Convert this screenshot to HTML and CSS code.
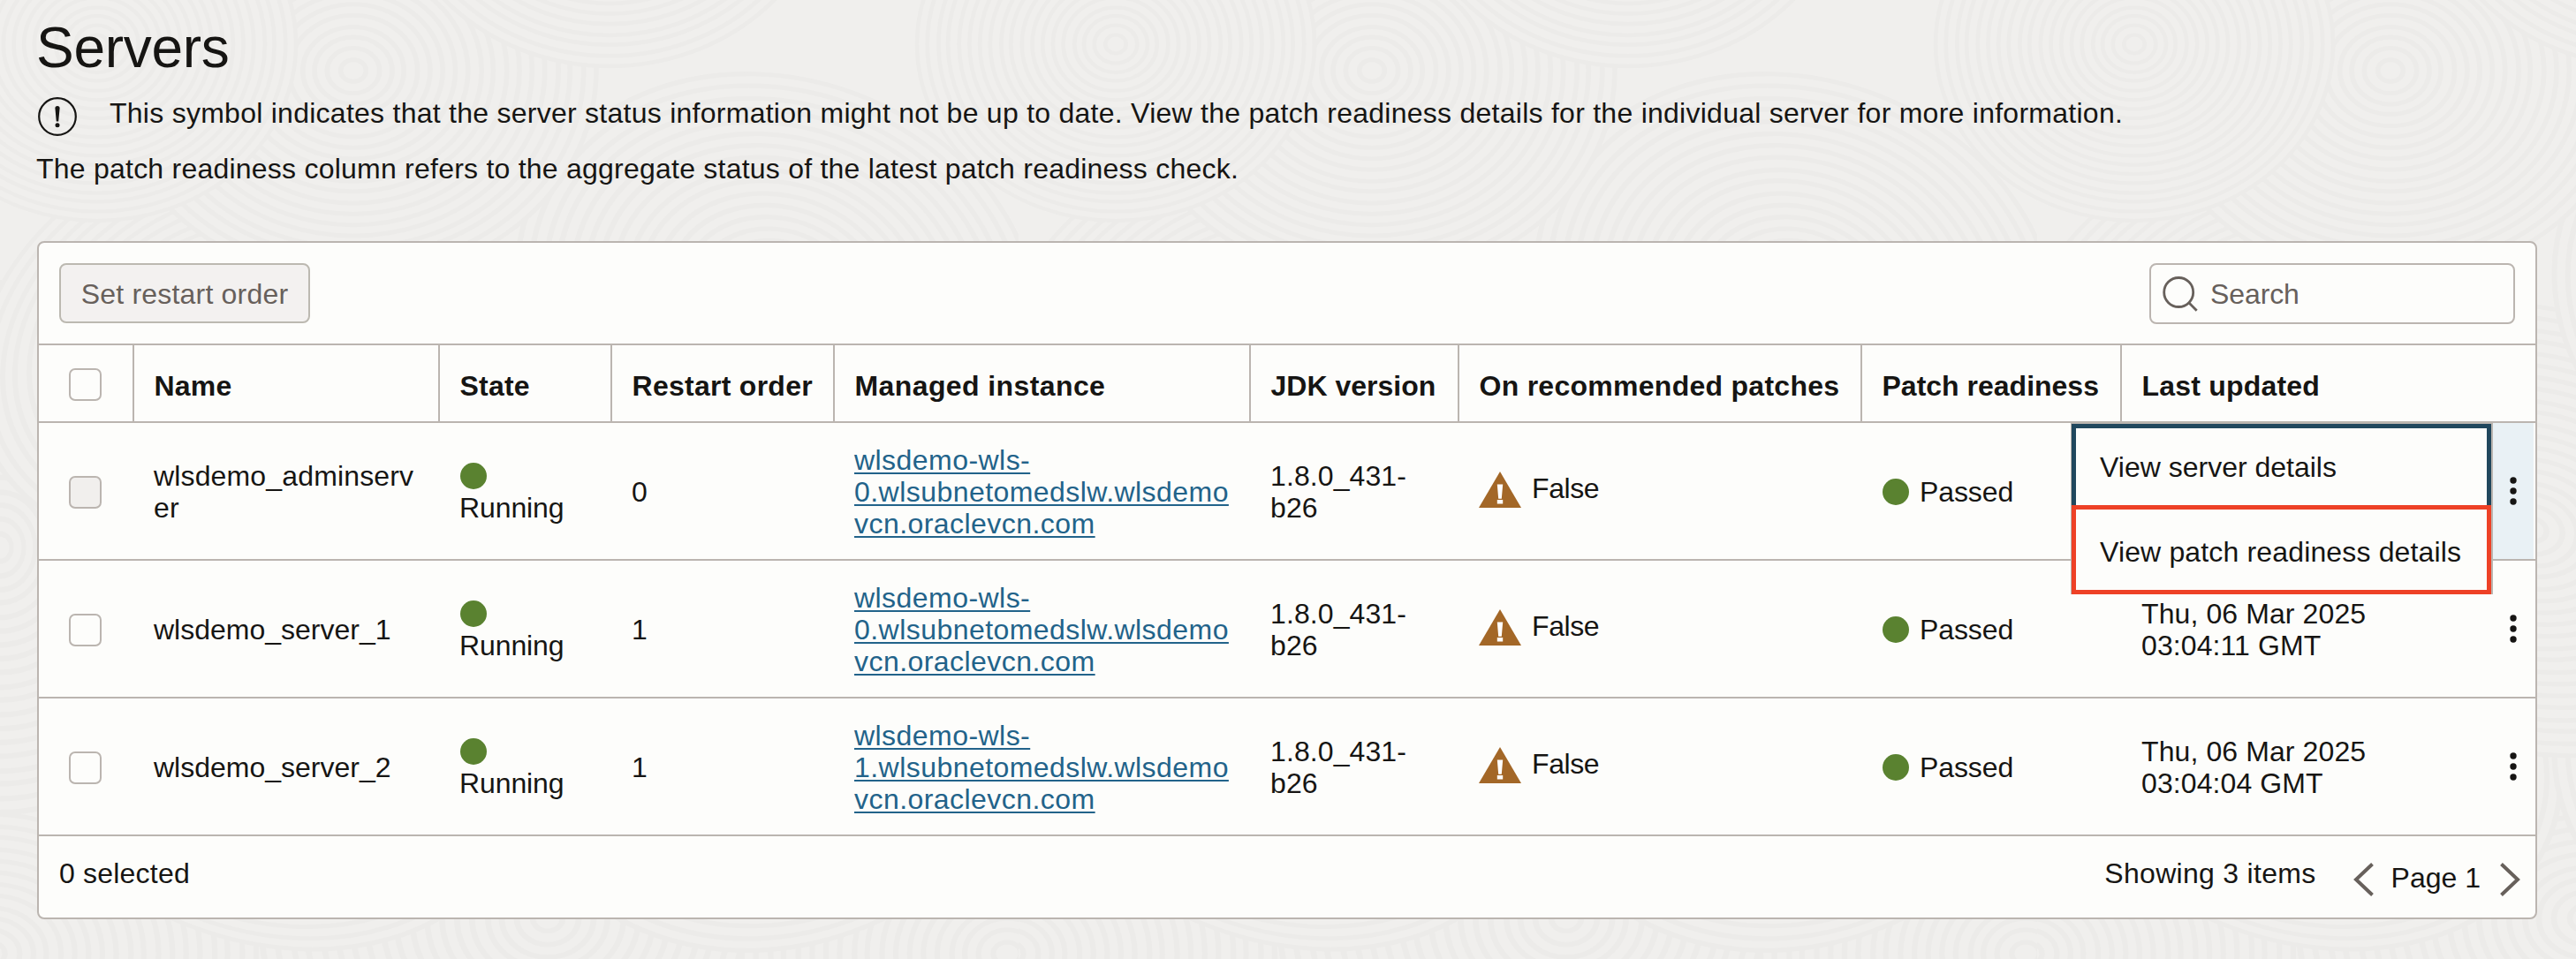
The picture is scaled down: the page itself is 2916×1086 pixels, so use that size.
FILE: index.html
```
<!DOCTYPE html>
<html lang="en">
<head>
<meta charset="utf-8">
<title>Servers</title>
<link rel="stylesheet" href="styles.css">
</head>
<body>
<svg class="texture" aria-hidden="true">
  <defs>
    <g id="rings">
      <circle r="250"/><circle r="237"/><circle r="223"/><circle r="211"/><circle r="197"/><circle r="184"/><circle r="171"/><circle r="158"/><circle r="144"/><circle r="132"/><circle r="118"/><circle r="105"/><circle r="92"/><circle r="79"/><circle r="66"/><circle r="52"/><circle r="40"/><circle r="27"/><circle r="13"/>
    </g>
    <pattern id="swirl" width="1153" height="1100" patternUnits="userSpaceOnUse">
      <g fill="#f0efed" stroke="#ecebe9" stroke-width="5">
        <use href="#rings" transform="translate(100 1060) scale(1.3 1)"/>
        <use href="#rings" transform="translate(620 1040) scale(1.3 1.1)"/>
        <use href="#rings" transform="translate(1140 1080) scale(1.2 1)"/>
        <use href="#rings" transform="translate(-10 1080) scale(1.2 1)"/>
        <use href="#rings" transform="translate(300 840) rotate(20) scale(1.2 .9)"/>
        <use href="#rings" transform="translate(880 820) rotate(-20) scale(1.2 1)"/>
        <use href="#rings" transform="translate(1153 620) scale(1 1.2)"/>
        <use href="#rings" transform="translate(0 620) scale(1 1.2)"/>
        <use href="#rings" transform="translate(560 600) rotate(15) scale(1.3 1)"/>
        <use href="#rings" transform="translate(260 380) rotate(-25) scale(1.2 .9)"/>
        <use href="#rings" transform="translate(880 340) rotate(20) scale(1.2 1)"/>
        <use href="#rings" transform="translate(400 80) scale(1.1 .95)"/>
        <use href="#rings" transform="translate(690 -150) scale(1 .9)"/>
        <use href="#rings" transform="translate(110 50) scale(.9 .8)"/>
        <use href="#rings" transform="translate(1263 50) scale(.9 .8)"/>
      </g>
    </pattern>
  </defs>
  <rect width="100%" height="100%" fill="url(#swirl)"/>
</svg>

<svg class="sprite" aria-hidden="true">
  <symbol id="warning" viewBox="0 0 48 41">
    <path d="M24 0L48 41H0z" fill="#a36727"/>
    <path d="M20.8 14.5h6.4l-1.4 16.2h-3.6zM20.8 32h6.4v4.6h-6.4z" fill="#fff"/>
  </symbol>
  <symbol id="kebab" viewBox="0 0 8 32">
    <circle cx="4" cy="4" r="3.7"/><circle cx="4" cy="16" r="3.7"/><circle cx="4" cy="28" r="3.7"/>
  </symbol>
</svg>

<main class="page">
  <h1 class="title">Servers</h1>
  <div class="notice">
    <svg class="notice-icon" viewBox="0 0 44 44">
      <circle cx="22" cy="22" r="20.8" fill="none" stroke="#161513" stroke-width="2.2"/>
      <path d="M19.4 12.5a2.6 2.6 0 0 1 5.2 0L23.2 27.5h-2.4z" fill="#161513"/>
      <circle cx="22" cy="31.7" r="2.5" fill="#161513"/>
    </svg>
    <p class="notice-text">This symbol indicates that the server status information might not be up to date. View the patch readiness details for the individual server for more information.</p>
  </div>
  <p class="intro">The patch readiness column refers to the aggregate status of the latest patch readiness check.</p>

  <section class="card">
    <div class="toolbar">
      <button class="restart" disabled>Set restart order</button>
      <div class="search">
        <svg class="search-icon" viewBox="0 0 40 40">
          <circle cx="18.2" cy="18" r="16.5"/><path d="M29.5 29.5L38.7 38.7"/>
        </svg>
        <span>Search</span>
      </div>
    </div>

    <div class="row head">
      <div class="cell pick"><span class="box"></span></div>
      <div class="cell">Name</div>
      <div class="cell">State</div>
      <div class="cell wide">Restart order</div>
      <div class="cell wider">Managed instance</div>
      <div class="cell flat">JDK version</div>
      <div class="cell wide">On recommended patches</div>
      <div class="cell flat">Patch readiness</div>
      <div class="cell last">Last updated</div>
    </div>

    <div class="row">
      <div class="cell pick"><span class="box off"></span></div>
      <div class="cell name long">wlsdemo_adminserver</div>
      <div class="cell state"><i class="dot"></i>Running</div>
      <div class="cell">0</div>
      <div class="cell"><a class="link">wlsdemo-wls-<br>0.wlsubnetomedslw.wlsdemo<br>vcn.oraclevcn.com</a></div>
      <div class="cell jdk">1.8.0_431-<br>b26</div>
      <div class="cell patches"><svg class="warn"><use href="#warning"/></svg><span>False</span></div>
      <div class="cell ready"><i class="dot"></i>Passed</div>
      <div class="cell"></div>
      <div class="cell actions open"><svg class="dots"><use href="#kebab"/></svg></div>
    </div>

    <div class="row">
      <div class="cell pick"><span class="box"></span></div>
      <div class="cell name">wlsdemo_server_1</div>
      <div class="cell state"><i class="dot"></i>Running</div>
      <div class="cell">1</div>
      <div class="cell"><a class="link">wlsdemo-wls-<br>0.wlsubnetomedslw.wlsdemo<br>vcn.oraclevcn.com</a></div>
      <div class="cell jdk">1.8.0_431-<br>b26</div>
      <div class="cell patches"><svg class="warn"><use href="#warning"/></svg><span>False</span></div>
      <div class="cell ready"><i class="dot"></i>Passed</div>
      <div class="cell date">Thu, 06 Mar 2025<br>03:04:11 GMT</div>
      <div class="cell actions"><svg class="dots"><use href="#kebab"/></svg></div>
    </div>

    <div class="row">
      <div class="cell pick"><span class="box"></span></div>
      <div class="cell name">wlsdemo_server_2</div>
      <div class="cell state"><i class="dot"></i>Running</div>
      <div class="cell">1</div>
      <div class="cell"><a class="link">wlsdemo-wls-<br>1.wlsubnetomedslw.wlsdemo<br>vcn.oraclevcn.com</a></div>
      <div class="cell jdk">1.8.0_431-<br>b26</div>
      <div class="cell patches"><svg class="warn"><use href="#warning"/></svg><span>False</span></div>
      <div class="cell ready"><i class="dot"></i>Passed</div>
      <div class="cell date">Thu, 06 Mar 2025<br>03:04:04 GMT</div>
      <div class="cell actions"><svg class="dots"><use href="#kebab"/></svg></div>
    </div>

    <div class="footer">
      <span>0 selected</span>
      <div class="paging">
        <span class="showing">Showing 3 items</span>
        <svg class="chevron" viewBox="0 0 24 38"><path d="M21.5 1.500L3 19l18.500 17.500"/></svg>
        <span class="number">Page 1</span>
        <svg class="chevron" viewBox="0 0 24 38"><path d="M2.500 1.500L21 19 2.500 36.500"/></svg>
      </div>
    </div>

    <div class="menu">
      <div class="item focused">View server details</div>
      <div class="item marked">View patch readiness details</div>
    </div>
  </section>
</main>
</body>
</html>
```
FILE: styles.css
```
* { box-sizing: border-box; }

body {
  margin: 0;
  height: 1086px;
  overflow: hidden;
  background: #f0efed;
  color: #161513;
  font: 32px/36px "Liberation Sans", Arial, sans-serif;
  letter-spacing: .2px;
}

.texture { position: absolute; inset: 0; z-index: -1; width: 100%; height: 100%; }
.sprite { position: absolute; width: 0; height: 0; }

.page { padding: 17px 44px 0 42px; }

.title {
  margin: 0 0 0 -1px;
  font-size: 64px;
  font-weight: 400;
  line-height: 74px;
  letter-spacing: -.3px;
}

.notice { display: flex; gap: 37px; height: 63px; padding: 19px 0 0 1px; }
.notice-icon { width: 44px; height: 44px; }
.notice-text { margin: 0; letter-spacing: .26px; }
.intro { margin: 19px 0 64px -1px; letter-spacing: .23px; white-space: nowrap; }

.card {
  position: relative;
  height: 768px;
  border: 2px solid #bbb5b0;
  border-radius: 8px;
  background: #fdfdfb;
}

.toolbar {
  display: flex;
  justify-content: space-between;
  height: 116px;
  padding: 23px 23px 0;
  border-bottom: 2px solid #bbb5b0;
}

.restart {
  width: 284px;
  height: 68px;
  padding: 1px 0 0;
  border: 2px solid #bcb9b1;
  border-radius: 8px;
  background: #f3f1f0;
  color: #67605b;
  font: inherit;
  letter-spacing: .2px;
}

.search {
  display: flex;
  align-items: center;
  gap: 14px;
  width: 414px;
  height: 69px;
  padding: 0 0 0 13px;
  border: 2px solid #bbb5b0;
  border-radius: 8px;
  color: #67605b;
  letter-spacing: -.1px;
}
.search-icon {
  width: 40px;
  height: 40px;
  fill: none;
  stroke: #67605b;
  stroke-width: 2.8;
}

.row {
  display: grid;
  grid-template-columns: 108px 346px 195px 252px 471px 236px 456px 294px 418px 50px;
  height: 156px;
  border-bottom: 2px solid #bbb5b0;
}

.cell {
  display: flex;
  align-items: center;
  padding: 2px 22px 0;
}

.head { height: 88px; font-weight: 700; white-space: nowrap; }
.head .cell { padding: 5px 0 0 22.500px; border-right: 2px solid #bbb5b0; }
.head .cell.last { border-right: 0; }
.head .wide { letter-spacing: .27px; }
.head .wider { letter-spacing: .4px; }
.head .flat { letter-spacing: 0; }

.cell.pick { padding: 0 0 0 34px; }
.head .cell.pick { padding: 3px 0 0 34px; }
.row .pick { padding-top: 2px; }
.box {
  width: 37px;
  height: 37px;
  border: 2px solid #bbb5b0;
  border-radius: 7px;
}
.box.off { background: #f1efed; }

.name { overflow-wrap: anywhere; letter-spacing: 0; }
.name.long { letter-spacing: .15px; }

.dot {
  flex: none;
  width: 30px;
  height: 30px;
  border-radius: 50%;
  background: #5a8230;
}
.state {
  flex-direction: column;
  align-items: flex-start;
  justify-content: center;
  letter-spacing: -.1px;
}
.state .dot { margin: 3px 0 3px 1px; }
.ready { letter-spacing: -.1px; }
.ready .dot { margin: 0 12px 0 1px; }

.link {
  color: #22638a;
  letter-spacing: .45px;
  white-space: nowrap;
  text-decoration: underline;
  text-decoration-thickness: 2px;
  text-underline-offset: 3px;
}

.jdk { letter-spacing: .1px; }
.date { letter-spacing: .1px; }

.patches { padding-bottom: 8px; gap: 12px; letter-spacing: -.4px; }
.warn { width: 48px; height: 41px; margin-top: 3px; }

.cell.actions { justify-content: center; margin-right: 2px; padding: 0; }
.actions.open { background: #e9f1f5; }
.dots { width: 8px; height: 32px; margin-left: 2px; fill: #161513; }

.footer {
  display: flex;
  justify-content: space-between;
  padding: 24px 17px 0 23px;
}
.paging { display: flex; }
.showing { margin-right: 42px; letter-spacing: .3px; }
.number { margin: 5px 21px 0 19px; letter-spacing: 0; }
.chevron {
  width: 24px;
  height: 38px;
  margin-top: 6px;
  fill: none;
  stroke: #67605b;
  stroke-width: 4;
}

.menu {
  position: absolute;
  top: 203px;
  left: 2300px;
  width: 478px;
  border: 1px solid #bbb5b0;
  border-width: 2px 2px 0 1px;
  background: #fdfdfb;
  white-space: nowrap;
}
.item { padding: 26px 27px; border: 5px solid; color: #161513; letter-spacing: .15px; }
.item.focused { height: 92px; border-color: #20475d; border-bottom: 0; letter-spacing: 0; }
.item.marked { height: 101px; padding-top: 30px; border-color: #ee4126; }
```
